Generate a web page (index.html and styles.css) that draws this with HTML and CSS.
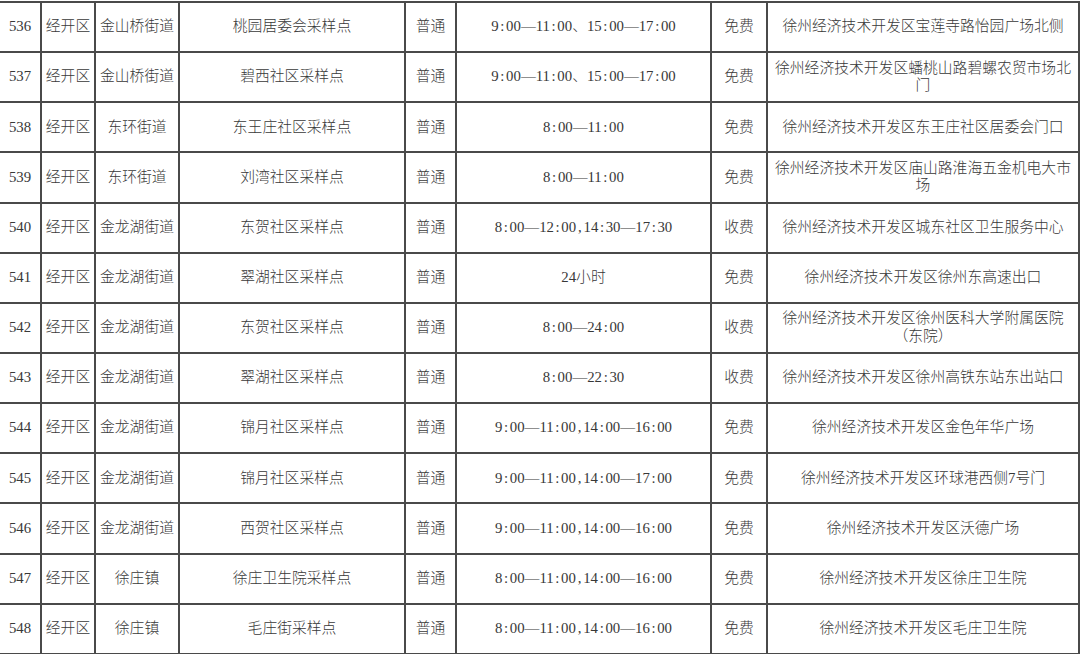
FILE: index.html
```html
<!DOCTYPE html>
<html lang="zh-CN">
<head>
<meta charset="utf-8">
<title>采样点</title>
<link rel="stylesheet" href="styles.css">
</head>
<body>
<table class="sites">
  <colgroup>
    <col class="c-no"><col class="c-area"><col class="c-street"><col class="c-name"><col class="c-type"><col class="c-time"><col class="c-fee"><col class="c-addr">
  </colgroup>
  <tbody>
    <tr><td>536</td><td>经开区</td><td>金山桥街道</td><td>桃园居委会采样点</td><td>普通</td><td>9<span class="k">:</span>00—11<span class="k">:</span>00、15<span class="k">:</span>00—17<span class="k">:</span>00</td><td>免费</td><td class="addr">徐州经济技术开发区宝莲寺路怡园广场北侧</td></tr>
    <tr><td>537</td><td>经开区</td><td>金山桥街道</td><td>碧西社区采样点</td><td>普通</td><td>9<span class="k">:</span>00—11<span class="k">:</span>00、15<span class="k">:</span>00—17<span class="k">:</span>00</td><td>免费</td><td class="addr">徐州经济技术开发区蟠桃山路碧螺农贸市场北门</td></tr>
    <tr><td>538</td><td>经开区</td><td>东环街道</td><td>东王庄社区采样点</td><td>普通</td><td>8<span class="k">:</span>00—11<span class="k">:</span>00</td><td>免费</td><td class="addr">徐州经济技术开发区东王庄社区居委会门口</td></tr>
    <tr><td>539</td><td>经开区</td><td>东环街道</td><td>刘湾社区采样点</td><td>普通</td><td>8<span class="k">:</span>00—11<span class="k">:</span>00</td><td>免费</td><td class="addr">徐州经济技术开发区庙山路淮海五金机电大市场</td></tr>
    <tr><td>540</td><td>经开区</td><td>金龙湖街道</td><td>东贺社区采样点</td><td>普通</td><td>8<span class="k">:</span>00—12<span class="k">:</span>00<span class="k">,</span>14<span class="k">:</span>30—17<span class="k">:</span>30</td><td>收费</td><td class="addr">徐州经济技术开发区城东社区卫生服务中心</td></tr>
    <tr><td>541</td><td>经开区</td><td>金龙湖街道</td><td>翠湖社区采样点</td><td>普通</td><td>24小时</td><td>免费</td><td class="addr">徐州经济技术开发区徐州东高速出口</td></tr>
    <tr><td>542</td><td>经开区</td><td>金龙湖街道</td><td>东贺社区采样点</td><td>普通</td><td>8<span class="k">:</span>00—24<span class="k">:</span>00</td><td>收费</td><td class="addr">徐州经济技术开发区徐州医科大学附属医院（东院）</td></tr>
    <tr><td>543</td><td>经开区</td><td>金龙湖街道</td><td>翠湖社区采样点</td><td>普通</td><td>8<span class="k">:</span>00—22<span class="k">:</span>30</td><td>收费</td><td class="addr">徐州经济技术开发区徐州高铁东站东出站口</td></tr>
    <tr><td>544</td><td>经开区</td><td>金龙湖街道</td><td>锦月社区采样点</td><td>普通</td><td>9<span class="k">:</span>00—11<span class="k">:</span>00<span class="k">,</span>14<span class="k">:</span>00—16<span class="k">:</span>00</td><td>免费</td><td class="addr">徐州经济技术开发区金色年华广场</td></tr>
    <tr><td>545</td><td>经开区</td><td>金龙湖街道</td><td>锦月社区采样点</td><td>普通</td><td>9<span class="k">:</span>00—11<span class="k">:</span>00<span class="k">,</span>14<span class="k">:</span>00—17<span class="k">:</span>00</td><td>免费</td><td class="addr">徐州经济技术开发区环球港西侧7号门</td></tr>
    <tr><td>546</td><td>经开区</td><td>金龙湖街道</td><td>西贺社区采样点</td><td>普通</td><td>9<span class="k">:</span>00—11<span class="k">:</span>00<span class="k">,</span>14<span class="k">:</span>00—16<span class="k">:</span>00</td><td>免费</td><td class="addr">徐州经济技术开发区沃德广场</td></tr>
    <tr><td>547</td><td>经开区</td><td>徐庄镇</td><td>徐庄卫生院采样点</td><td>普通</td><td>8<span class="k">:</span>00—11<span class="k">:</span>00<span class="k">,</span>14<span class="k">:</span>00—16<span class="k">:</span>00</td><td>免费</td><td class="addr">徐州经济技术开发区徐庄卫生院</td></tr>
    <tr><td>548</td><td>经开区</td><td>徐庄镇</td><td>毛庄街采样点</td><td>普通</td><td>8<span class="k">:</span>00—11<span class="k">:</span>00<span class="k">,</span>14<span class="k">:</span>00—16<span class="k">:</span>00</td><td>免费</td><td class="addr">徐州经济技术开发区毛庄卫生院</td></tr>
  </tbody>
</table>
</body>
</html>
```
FILE: styles.css
```css
html, body {
  margin: 0;
  padding: 0;
  background: #ffffff;
}

body {
  font-family: "Liberation Serif", "Noto Sans CJK SC", serif;
  font-size: 14.8px;
  font-weight: 300;
  color: #383838;
}

.sites {
  border-collapse: collapse;
  table-layout: fixed;
  width: 1079px;
  margin-top: 1px;
}

.c-no { width: 41px; }
.c-area { width: 54px; }
.c-street { width: 84px; }
.c-name { width: 226px; }
.c-type { width: 51px; }
.c-time { width: 255px; }
.c-fee { width: 56px; }
.c-addr { width: 312px; }

.sites td {
  height: 48.15px;
  padding: 0;
  border: 2px solid #4a4a4a;
  text-align: center;
  vertical-align: middle;
  line-height: 17.5px;
  white-space: nowrap;
  overflow: hidden;
}

.sites td:first-child {
  border-left: none;
}

.sites td.addr {
  white-space: normal;
  padding: 0 4px;
}

.k {
  display: inline-block;
  width: 0.5em;
  text-align: center;
}
```
